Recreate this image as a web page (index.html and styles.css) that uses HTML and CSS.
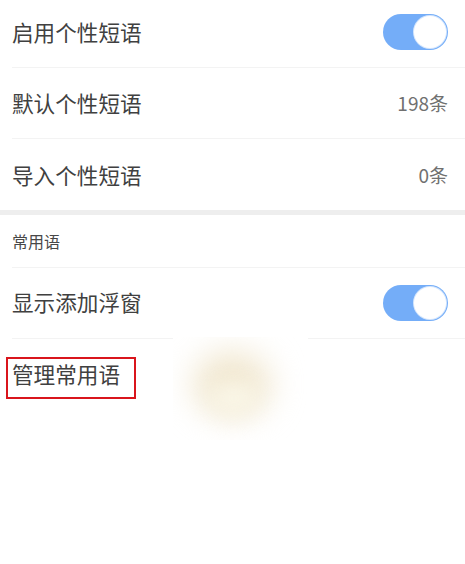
FILE: index.html
```html
<!DOCTYPE html>
<html lang="zh">
<head>
<meta charset="utf-8">
<title>个性短语</title>
<link rel="stylesheet" href="styles.css">
</head>
<body>
<main class="page">
  <section class="group">
    <div class="row row-first"><span class="label">启用个性短语</span><span class="toggle"><span class="knob"></span></span></div>
    <div class="row"><span class="label">默认个性短语</span><span class="value">198条</span></div>
    <div class="row row-last"><span class="label">导入个性短语</span><span class="value">0条</span></div>
  </section>
  <div class="band"></div>
  <section class="group group-raised">
    <div class="heading">常用语</div>
    <div class="row"><span class="label">显示添加浮窗</span><span class="toggle"><span class="knob"></span></span></div>
    <div class="row row-last"><span class="label">管理常用语</span></div>
  </section>
  <div class="patch"><div class="blob"></div><div class="blob-light"></div></div>
  <div class="highlight"></div>
</main>
</body>
</html>
```
FILE: styles.css
```css
* { box-sizing: border-box; }
html, body { margin: 0; padding: 0; background: #fff; }
body { font-family: "Noto Sans CJK SC", "Noto Sans", sans-serif; color: #404040; }
.page { position: relative; width: 465px; height: 564px; overflow: hidden; background: #fff; }
.group { margin-left: 12px; }
.row { display: flex; align-items: center; justify-content: space-between; height: 71px; padding-right: 17px; border-bottom: 1px solid #f3f3f3; }
.row-first { height: 68px; padding-bottom: 3px; }
.row-last { border-bottom: 0; }
.label { font-size: 21.6px; line-height: 30px; }
.group-raised .label { margin-bottom: 2px; }
.value { font-size: 19px; line-height: 26px; color: #707070; }
.band { height: 5px; background: #eeeeee; }
.heading { height: 53px; display: flex; align-items: center; font-size: 16px; color: #484848; border-bottom: 1px solid #f3f3f3; }
.toggle { display: flex; justify-content: flex-end; width: 65px; height: 36px; padding: 2px; border-radius: 18px; background: #74adf8; }
.knob { width: 32px; height: 32px; border-radius: 50%; background: #fff; box-shadow: 0 0 0 1px #d5e6fc; }
.patch { position: absolute; left: 173px; top: 337px; width: 135px; height: 103px; background: #fff; overflow: hidden; }
.blob { position: absolute; left: 20px; top: 14px; width: 78px; height: 66px; border-radius: 50%; background: #f1e7cf; filter: blur(16px); }
.blob-light { position: absolute; left: 36px; top: 44px; width: 50px; height: 34px; border-radius: 50%; background: #f9f5e6; filter: blur(10px); }
.highlight { position: absolute; left: 6px; top: 357px; width: 130px; height: 42px; border: 2.5px solid #d9151c; }
```
